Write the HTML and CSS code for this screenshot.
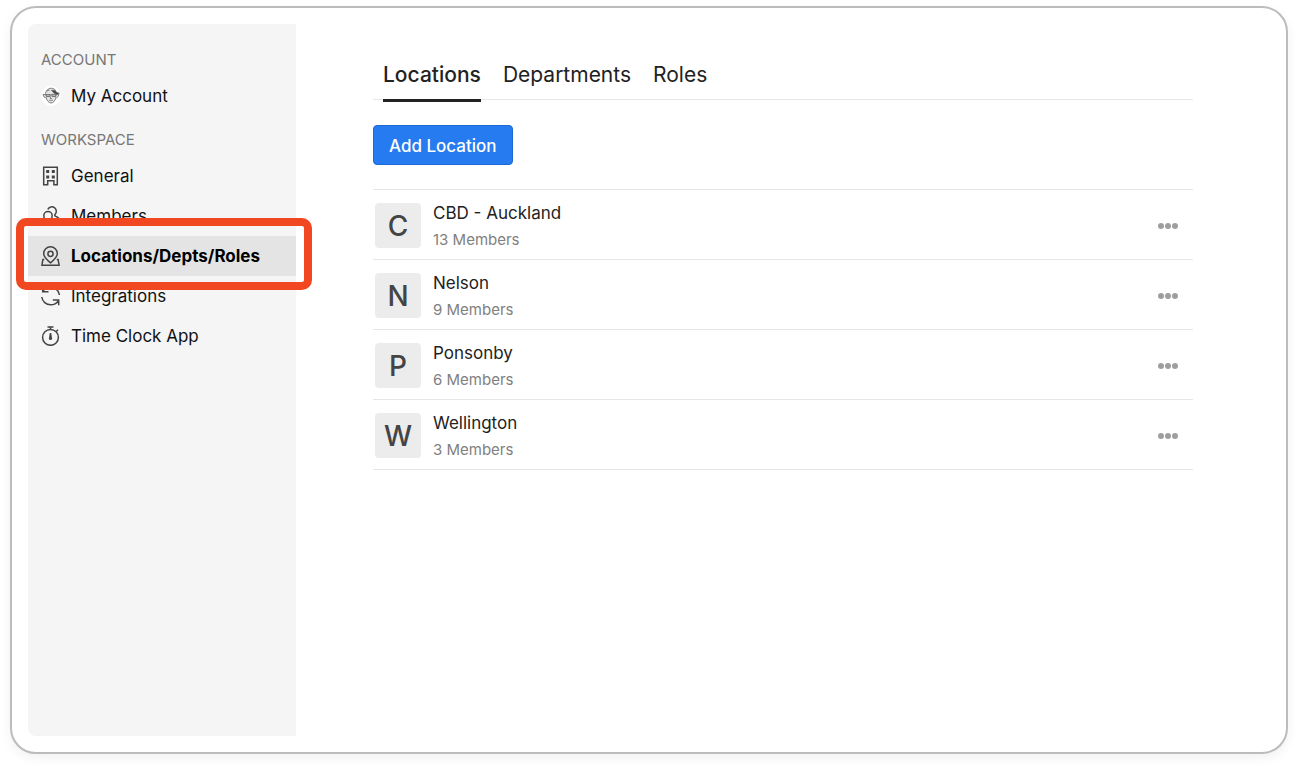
FILE: index.html
```html
<!DOCTYPE html>
<html lang="en">
<head>
	<meta charset="UTF-8">
	<meta name="viewport" content="width=device-width, initial-scale=1">
	<title>Locations</title>
	<link rel="stylesheet" href="styles.css">
</head>
<body>
<div class="frame">
	<nav class="sidebar">
		<h2>Account</h2>
		<ul>
			<li>
				<a href="#">
					<svg class="icon face" viewBox="0 0 20 20">
						<circle cx="10" cy="10" r="10" fill="#fff" stroke="none"/>
						<path d="M4.500 7.500C5 4 7.500 2.200 10.300 2.200c3 0 5 2 5.200 5.300l-.6 4c-.5 3.200-2.800 5.500-4.900 5.500s-4.300-2.500-4.900-5.500z" fill="#e4e4e4"/>
						<path d="M4.600 8.800L2 8.300l.8 2.500 2 1M15.500 8.800l2.600-1.500-.8 3-2 1.700" fill="#e4e4e4"/>
						<path d="M10.500 4.200l3 .3 2.300 2.200 2 .2-1.500 1.500-3-1.200z" fill="#444"/>
						<path d="M5 8.500h4v2H5.500zM11 8.300h4l-.5 2.200h-3.300zM9 8.900h2" fill="#bbb"/>
						<path d="M9.800 10.500l-.4 2h1.400M8.200 14.300h3.600M6 5l2.500-1" fill="none"/>
					</svg>
					My Account
				</a>
			</li>
		</ul>
		<h2>Workspace</h2>
		<ul>
			<li>
				<a href="#">
					<svg class="icon" viewBox="0 0 20 20">
						<path d="M2.700 1.200h13.600v17.600h-3.400v-4H6.700v4H2.700z"/>
						<path class="solid" d="M5.200 4h3v3h-3zM10.800 4h3v3h-3zM5.200 9.500h3v3h-3zM10.800 9.500h3v3h-3z"/>
					</svg>
					General
				</a>
			</li>
			<li>
				<a href="#">
					<svg class="icon" viewBox="0 0 20 20">
						<circle cx="7" cy="9.800" r="4.200"/>
						<path d="M6.800 3.300a4.500 4.500 0 1 1 7.200 5.200c-.6.700 0 1.500 1 1.900 2.200.8 3.400 2.200 3.700 4.500M.8 19c.5-3 2.700-5 6.200-5s5.700 2 6.200 5z"/>
					</svg>
					Members
				</a>
			</li>
			<li class="current">
				<a href="#">
					<svg class="icon" viewBox="0 0 20 20">
						<path d="M9.500 16.800C6 14 2.700 11.300 2.700 7.600a6.800 6.800 0 0 1 13.600 0c0 3.700-3.300 6.400-6.800 9.200z"/>
						<circle cx="9.500" cy="7.800" r="2.600"/>
						<path d="M3.200 13.500H1.900L.9 19.200h17.200l-1-5.700h-1.300"/>
					</svg>
					Locations/Depts/Roles
				</a>
			</li>
			<li>
				<a href="#">
					<svg class="icon" viewBox="0 0 20 20">
						<path d="M.8 11c.6 4.500 4.200 7.800 8.900 7.800 3.300 0 6-1.600 7.600-4M11.800 14h5.900v5.300M18.500 9c-.6-4.500-4.300-7.800-9-7.800-3.300 0-6 1.600-7.600 4M7.500 5.800H1.700v-5"/>
					</svg>
					Integrations
				</a>
			</li>
			<li>
				<a href="#">
					<svg class="icon" viewBox="0 0 20 20">
						<circle cx="9.500" cy="11.400" r="7.900"/>
						<path d="M9.500 3.500V1M6.500 1h6M15 5.800l2-2M9.500 7v4"/>
						<path class="solid" d="M8.900 7.500h1.200l1 5a1.600 1.600 0 1 1-3.200 0z"/>
					</svg>
					Time Clock App
				</a>
			</li>
		</ul>
	</nav>

	<main class="content">
		<div class="inner">
			<div class="tabs">
				<a class="current" href="#">Locations</a>
				<a href="#">Departments</a>
				<a href="#">Roles</a>
			</div>
			<button class="add" type="button">Add Location</button>
			<ul class="list">
				<li>
					<span class="letter">C</span>
					<div class="info">
						<h3>CBD - Auckland</h3>
						<p>13 Members</p>
					</div>
					<button class="more" type="button" aria-label="More"><i></i><i></i><i></i></button>
				</li>
				<li>
					<span class="letter">N</span>
					<div class="info">
						<h3>Nelson</h3>
						<p>9 Members</p>
					</div>
					<button class="more" type="button" aria-label="More"><i></i><i></i><i></i></button>
				</li>
				<li>
					<span class="letter">P</span>
					<div class="info">
						<h3>Ponsonby</h3>
						<p>6 Members</p>
					</div>
					<button class="more" type="button" aria-label="More"><i></i><i></i><i></i></button>
				</li>
				<li>
					<span class="letter">W</span>
					<div class="info">
						<h3>Wellington</h3>
						<p>3 Members</p>
					</div>
					<button class="more" type="button" aria-label="More"><i></i><i></i><i></i></button>
				</li>
			</ul>
		</div>
	</main>
</div>
</body>
</html>
```
FILE: styles.css
```css
*{margin: 0;padding: 0;list-style: none;box-sizing: border-box;}
body{
	font-family: Inter, "Liberation Sans", sans-serif;
	color: #222;
	background: #fff;
	display: flow-root;
}
a{
	color: inherit;
	text-decoration: none;
}
.frame{
	display: flex;
	min-height: calc(100vh - 20px);
	margin: 6px 10px 14px;
	padding: 16px;
	border: 2px solid #bcbcbc;
	border-radius: 26px;
	background: #fff;
	box-shadow: 0 4px 12px rgba(0,0,0,.06);
}

/* sidebar */
.sidebar{
	flex: 0 0 268px;
	padding-top: 20px;
	background: #f5f5f5;
	border-radius: 8px 0 0 8px;
}
.sidebar h2{
	padding-left: 13px;
	font-size: 15px;
	line-height: 32px;
	font-weight: 400;
	color: #777;
	text-transform: uppercase;
}
.sidebar ul{
	margin-bottom: 8px;
}
.sidebar li{
	position: relative;
}
.sidebar a{
	display: flex;
	align-items: center;
	gap: 10px;
	height: 40px;
	padding-left: 13px;
	font-size: 17px;
	color: #111;
}
.sidebar .current a{
	background: #e4e4e4;
	font-weight: 700;
	color: #000;
}
/* red marker round the current item */
.sidebar .current::after{
	content: "";
	position: absolute;
	z-index: 1;
	top: -18px;
	right: -16px;
	bottom: -14px;
	left: -12px;
	border: 8px solid #f24822;
	border-radius: 10px;
	pointer-events: none;
}
.icon{
	flex: none;
	width: 20px;
	height: 20px;
	fill: none;
	stroke: #444;
	stroke-width: 1.5;
}
.icon .solid{
	fill: #444;
	stroke: none;
}
.face{
	stroke: #555;
	stroke-width: .7;
}

/* content */
.content{
	flex: 1;
	min-width: 0;
	padding-top: 28px;
}
.inner{
	max-width: 820px;
	margin: 0 auto;
}
.tabs{
	display: flex;
	gap: 22px;
	height: 48px;
	padding-left: 10px;
	border-bottom: 1px solid #e6e6e6;
	font-size: 21px;
	line-height: 46px;
}
.tabs a{
	height: 50px;
}
.tabs .current{
	border-bottom: 3px solid #222;
	font-weight: 500;
}
.add{
	display: block;
	height: 40px;
	margin: 25px 0 24px;
	padding: 1px 15px 0;
	border: 1px solid #1c68d4;
	border-radius: 4px;
	background: #277bf0;
	color: #fff;
	font-family: inherit;
	font-size: 17px;
	font-weight: 500;
}
.list{
	border-top: 1px solid #e6e6e6;
}
.list li{
	display: flex;
	align-items: center;
	height: 70px;
	padding: 2px 10px 0 2px;
	border-bottom: 1px solid #e6e6e6;
}
.letter{
	width: 46px;
	height: 45px;
	margin-right: 12px;
	border-radius: 4px;
	background: #ececec;
	color: #444;
	font-size: 28px;
	font-weight: 500;
	line-height: 46px;
	text-align: center;
}
.info{
	flex: 1;
}
.info h3{
	font-size: 17px;
	line-height: 28px;
	font-weight: 400;
}
.info p{
	font-size: 15px;
	line-height: 26px;
	color: #808080;
}
.more{
	display: flex;
	gap: 1px;
	padding: 10px 5px;
	border: 0;
	background: none;
	cursor: pointer;
}
.more i{
	width: 6px;
	height: 6px;
	border-radius: 50%;
	background: #9e9e9e;
}
```
